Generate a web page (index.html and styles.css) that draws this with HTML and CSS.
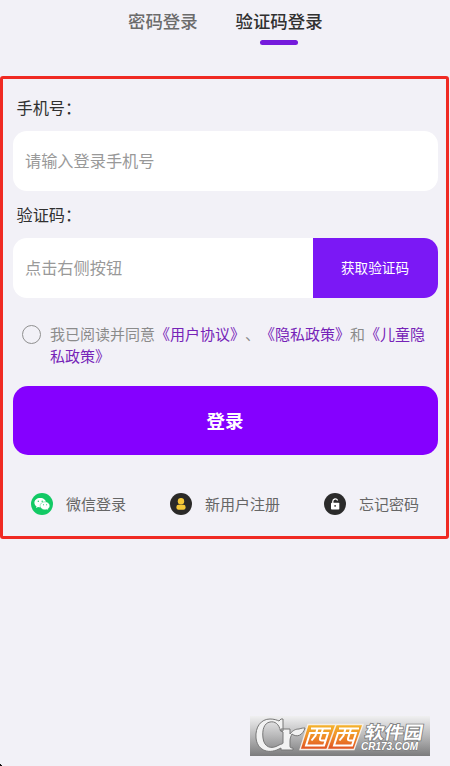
FILE: index.html
```html
<!DOCTYPE html>
<html lang="zh-CN">
<head>
<meta charset="utf-8">
<title>验证码登录</title>
<link rel="stylesheet" href="styles.css">
</head>
<body>
<nav class="tabs">
  <a class="tab">密码登录</a>
  <a class="tab active">验证码登录</a>
</nav>
<main class="panel">
  <label class="label">手机号：</label>
  <div class="field"><span class="placeholder">请输入登录手机号</span></div>
  <label class="label second">验证码：</label>
  <div class="field"><span class="placeholder">点击右侧按钮</span><button class="code">获取验证码</button></div>
  <div class="agree">
    <span class="radio"></span>
    <p class="terms">我已阅读并同意<a>《用户协议》</a>、<a>《隐私政策》</a>和<a>《儿童隐私政策》</a></p>
  </div>
  <button class="login">登录</button>
  <div class="links">
    <a class="link wechat">
      <svg class="icon" viewBox="0 0 22 22"><circle cx="11" cy="11" r="11" fill="#12c964"/><path d="M9.200 4.900c-3.400 0-5.800 2.100-5.800 4.800 0 1.500.8 2.800 2.100 3.600L5 15l2-1c.8.2 1.500.3 2.400.3 3.300 0 5.600-2.100 5.600-4.700S12.600 4.900 9.200 4.900z" fill="#fff"/><path d="M14 8.800c-2.900 0-4.900 1.800-4.900 4s2 4 4.900 4c.6 0 1.200-.1 1.800-.3l1.500.8-.4-1.400c1.200-.8 1.900-1.800 1.900-3.100 0-2.200-2-4-4.800-4z" fill="#fff" stroke="#12c964" stroke-width=".4"/><g fill="#12c964"><circle cx="7.300" cy="8.300" r=".7"/><circle cx="11.200" cy="8.300" r=".7"/><circle cx="12.500" cy="11.800" r=".55"/><circle cx="15.600" cy="11.800" r=".55"/></g></svg>
      微信登录
    </a>
    <a class="link register">
      <svg class="icon" viewBox="0 0 22 22"><circle cx="11" cy="11" r="11" fill="#2b2a28"/><circle cx="11" cy="8.300" r="3.200" fill="#f6c938"/><rect x="6.400" y="11.800" width="9.200" height="5" rx="2.100" fill="#f6c938"/></svg>
      新用户注册
    </a>
    <a class="link">
      <svg class="icon" viewBox="0 0 22 22"><circle cx="11" cy="11" r="11" fill="#2b2b2b"/><rect x="7" y="9.800" width="8.300" height="6.700" rx=".8" fill="#fff"/><path d="M8.800 10V8.300a2.500 2.500 0 0 1 4.800-.8" fill="none" stroke="#fff" stroke-width="1.300"/><path d="M11.100 12v1.800" stroke="#2b2b2b" stroke-width="1.300"/></svg>
      忘记密码
    </a>
  </div>
</main>
<div class="corner"></div>
<svg class="watermark" viewBox="0 0 180 40">
  <defs>
    <linearGradient id="back" x2="0" y2="1"><stop stop-color="#f0f0f1"/><stop offset=".5" stop-color="#b8b8b9"/><stop offset="1" stop-color="#7c7c7d"/></linearGradient>
    <linearGradient id="gold" x2="0" y2="1"><stop stop-color="#f4b52c"/><stop offset=".5" stop-color="#ef8c28"/><stop offset="1" stop-color="#df4f22"/></linearGradient>
  </defs>
  <rect width="180" height="40" fill="url(#back)"/>
  <path d="M33 3v12h-2.500C29 8 25 5 20 6c-6 1-8 8-7 16 1 9 8 12 16 7 2-1 4-1 4-2V16l-2-1v-2h9v5c3-4 6-5 9-5 3-1 4-1 6-1-2 7-8 10-13 6-1 2-2 4-2 7v5c0 2 1 2 3 2v2H31v-2l-2 1C17 39 7 33 6 22 5 11 11 3 20 3c4 0 7 1 9 2l2-2z" fill="#f2f2f2" stroke="#777" stroke-width="1"/>
  <path d="M58 8.500h55l-9 25H50z" fill="url(#gold)" stroke="#f5eee7" stroke-width="1.300"/>
  <path d="M86 8.500l-9 25" stroke="#f5eee7" stroke-width="1.500"/>
  <g fill="none" stroke="#fff" stroke-width="2">
    <path d="M61 12.500h20M60 17h18l-4 12.500H56zM67.500 12.500l-2 7-4 5M73 12.500l-3 10q-.5 2 2 2h3"/>
    <path d="M89 12.500h20M88 17h18l-4 12.500H84zM95.500 12.500l-2 7-4 5M101 12.500l-3 10q-.5 2 2 2h3"/>
  </g>
  <text class="brand" transform="translate(114 22.500) skewX(-10)" textLength="58" lengthAdjust="spacingAndGlyphs">软件园</text>
  <text class="domain" x="111" y="33.500" textLength="57" lengthAdjust="spacingAndGlyphs">CR173.COM</text>
</svg>
</body>
</html>
```
FILE: styles.css
```css
* { box-sizing: border-box; }
body {
  position: relative;
  margin: 0;
  height: 766px;
  overflow: hidden;
  background: #f2f1f7;
  color: #303030;
  font-family: "Noto Sans CJK SC", sans-serif;
}
button { border: 0; padding: 0; color: #fff; font-family: inherit; }
.tabs {
  display: flex;
  gap: 38px;
  height: 76px;
  padding: 8px 0 0 128px;
  font-size: 17.400px;
  font-weight: 500;
  line-height: 26px;
}
.tab { color: #6b6b6b; }
.tab.active { color: #303030; }
.tab.active::after {
  content: "";
  display: block;
  width: 38px;
  height: 5px;
  margin: 6px auto 0;
  border-radius: 3px;
  background: #751bdc;
}
.panel {
  width: 449px;
  height: 463px;
  padding: 16px 9px 0;
  border: 3px solid #f02a23;
  border-radius: 3px;
}
.label {
  display: block;
  height: 36px;
  padding-left: 4.500px;
  font-size: 16.200px;
  line-height: 24px;
}
.second { margin-top: 11px; }
.field {
  display: flex;
  align-items: center;
  justify-content: space-between;
  width: 425px;
  height: 60px;
  margin-left: .5px;
  padding-left: 12.500px;
  overflow: hidden;
  border-radius: 14px;
  background: #fff;
}
.placeholder { margin-top: -3px; color: #999; font-size: 16.200px; }
.code {
  width: 125px;
  height: 60px;
  padding-bottom: 2px;
  background: #7b18f5;
  font-size: 13.600px;
}
.agree { display: flex; height: 63px; margin: 25px 0 0 10px; }
.radio {
  width: 19px;
  height: 19px;
  margin: 2px 9px 0 0;
  border: 1px solid #909090;
  border-radius: 50%;
}
.terms {
  width: 377px;
  margin: 0;
  color: #8b8b8b;
  font-size: 15px;
  line-height: 22.400px;
  word-break: break-all;
  line-break: anywhere;
  text-spacing-trim: space-all;
}
.terms a { color: #7623b8; }
.login {
  display: block;
  width: 425px;
  height: 69px;
  margin-left: .5px;
  padding-bottom: 2px;
  border-radius: 15px;
  background: #8500ff;
  font-size: 18.500px;
  font-weight: 700;
}
.links {
  display: flex;
  margin: 37px 0 0 19px;
  color: #666;
  font-size: 15px;
  line-height: 24px;
}
.link { display: flex; align-items: center; gap: 13px; }
.wechat { margin-right: 44px; }
.register { margin-right: 44px; }
.icon { width: 22px; height: 22px; }
.watermark {
  position: absolute;
  left: 250px;
  top: 716px;
  width: 180px;
  height: 40px;
}
.brand {
  fill: #fff;
  stroke: #777;
  stroke-width: 1.500px;
  paint-order: stroke;
  font-size: 18px;
  font-weight: 700;
}
.domain {
  fill: #fff;
  stroke: #777;
  stroke-width: 1px;
  paint-order: stroke;
  font: italic bold 10px "Liberation Sans", sans-serif;
}
.corner {
  position: absolute;
  left: 0;
  bottom: 0;
  width: 2px;
  height: 3px;
  background: linear-gradient(45deg, #111 60%, transparent 60%);
}
```
